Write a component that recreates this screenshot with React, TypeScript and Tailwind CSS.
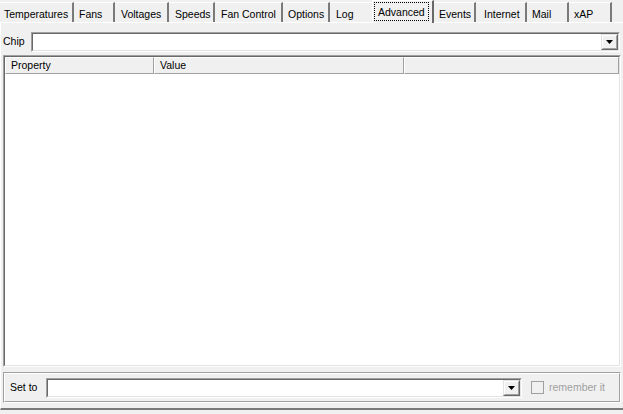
import React from "react";

const tabs = [
  { label: "Temperatures", w: 74, pl: 4 },
  { label: "Fans", w: 41, pl: 5 },
  { label: "Voltages", w: 54, pl: 6 },
  { label: "Speeds", w: 46, pl: 6 },
  { label: "Fan Control", w: 68, pl: 6 },
  { label: "Options", w: 47, pl: 5 },
  { label: "Log", w: 42, pl: 6, noSep: true },
  { label: "Advanced", w: 62, pl: 6, active: true },
  { label: "Events", w: 42, pl: 5 },
  { label: "Internet", w: 51, pl: 8 },
  { label: "Mail", w: 42, pl: 5 },
  { label: "xAP", w: 43, pl: 5 },
];

// sunken 3d edge, like a win32 edit box
function Sunken({ className, children }: { className?: string; children?: React.ReactNode }) {
  return (
    <div className={"border border-t-[#a0a0a0] border-l-[#a0a0a0] border-b-white border-r-white " + (className ?? "")}>
      <div className="h-full w-full border border-t-[#696969] border-l-[#696969] border-b-[#e3e3e3] border-r-[#e3e3e3] bg-white flex">
        {children}
      </div>
    </div>
  );
}

function DropButton() {
  return (
    <div className="ml-auto w-[17px] h-full border border-t-[#e3e3e3] border-l-[#e3e3e3] border-b-[#696969] border-r-[#696969] bg-[#f0f0f0]">
      <div className="h-full w-full border border-t-white border-l-white border-b-[#a0a0a0] border-r-[#a0a0a0] flex items-center justify-center">
        <svg width="7" height="4" viewBox="0 0 7 4">
          <path d="M0 0h7L3.5 4z" fill="#000" />
        </svg>
      </div>
    </div>
  );
}

function Combo({ className }: { className?: string }) {
  return (
    <Sunken className={className}>
      <DropButton />
    </Sunken>
  );
}

function HeaderCell({ label, w }: { label?: string; w?: number }) {
  return (
    <div
      className={"h-full border-r border-b border-r-[#a0a0a0] border-b-[#a0a0a0] border-t border-l border-t-white border-l-white bg-[#f0f0f0] flex items-center pl-[5px] " + (w ? "" : "flex-1")}
      style={w ? { width: w } : undefined}
    >
      {label}
    </div>
  );
}

export default function App() {
  return (
    <div
      className="w-[623px] h-[414px] bg-[#f0f0f0] text-[10.5px] text-black flex flex-col overflow-hidden"
      style={{ fontFamily: '"Liberation Sans", Arial, sans-serif' }}
    >
      {/* tab strip */}
      <div className="h-[22px] flex items-end relative z-10">
        {tabs.map((t) =>
          t.active ? (
            <div
              key={t.label}
              className="h-[23px] -mb-px bg-[#f0f0f0] border-t border-l border-t-white border-l-white border-r-2 border-r-[#696969] flex items-start pt-[1px] pl-[1px]"
              style={{ width: t.w }}
            >
              <div className="border border-dotted border-black px-[3px] h-[19px] flex items-center leading-none pt-px">
                {t.label}
              </div>
            </div>
          ) : (
            <div
              key={t.label}
              className={
                "h-[20px] border-t border-t-white flex items-center leading-none pt-[4px] " +
                (t.noSep ? "" : "border-r-2 border-r-[#7a7a7a]")
              }
              style={{ width: t.w, paddingLeft: t.pl }}
            >
              {t.label}
            </div>
          )
        )}
      </div>

      {/* page body */}
      <div className="h-[388px] border-t border-l border-t-white border-l-white border-b-2 border-b-[#7a7a7a] flex flex-col pl-[2px] pr-[2px] pt-[9px] pb-[5px]">
        <div className="flex items-center h-[20px]">
          <span className="w-[28px]">Chip</span>
          <Combo className="flex-1 h-[20px] mr-px" />
        </div>

        <Sunken className="mt-[3px] flex-1">
          <div className="flex flex-col w-full">
            <div className="flex h-[17px]">
              <HeaderCell label="Property" w={149} />
              <HeaderCell label="Value" w={250} />
              <HeaderCell />
            </div>
          </div>
        </Sunken>

        <div className="mt-[5px] h-[31px] border border-t-[#a0a0a0] border-l-[#a0a0a0] border-b-white border-r-white">
          <div className="h-full border border-t-white border-l-white border-b-[#a0a0a0] border-r-[#a0a0a0] flex items-center">
            <span className="pl-[5px] w-[41px]">Set to</span>
            <Combo className="w-[476px] h-[20px]" />
            <div className="ml-[9px] w-[13px] h-[13px] border border-[#a0a0a0] bg-[#f0f0f0]" />
            <span className="ml-[5px] text-[#a0a0a0]">remember it</span>
          </div>
        </div>
      </div>
    </div>
  );
}
